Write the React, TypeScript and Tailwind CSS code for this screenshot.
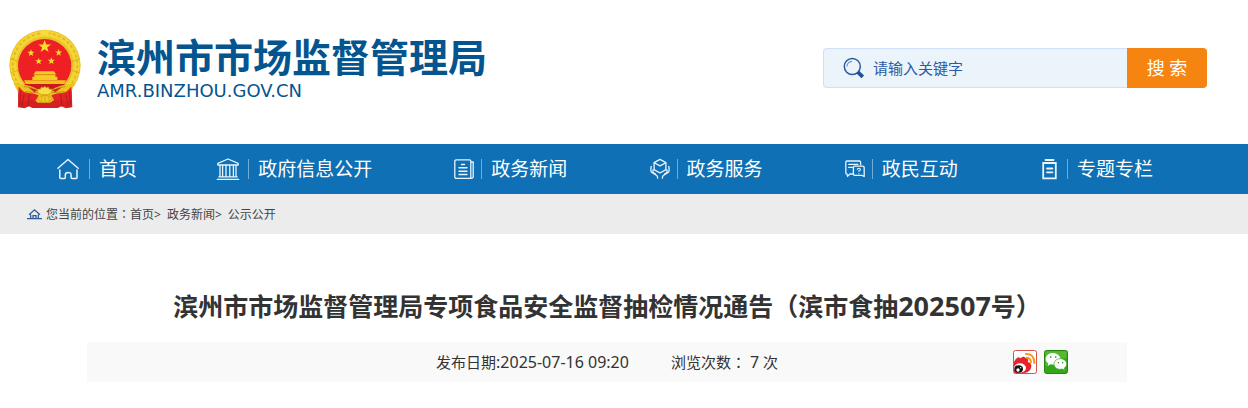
import type { ReactNode } from "react";

const STAR = "0,-10 2.4,-3.2 9.5,-3.1 3.8,1.2 5.9,8.1 0,4 -5.9,8.1 -3.8,1.2 -9.5,-3.1 -2.4,-3.2";

function Star({ x, y, s }: { x: number; y: number; s: number }) {
  return <polygon points={STAR} fill="#fbe02a" transform={`translate(${x} ${y}) scale(${s})`} />;
}

function Emblem() {
  return (
    <svg className="h-20 w-[72px] shrink-0" viewBox="27 29 216 240" role="img" aria-label="国徽">
      <circle cx="135" cy="138" r="107" fill="#e9c02a" />
      <circle cx="135" cy="138" r="95" fill="none" stroke="#f3d534" strokeWidth="18" />
      <circle cx="135" cy="138" r="97" fill="none" stroke="#e2b524" strokeWidth="5" strokeDasharray="9 7" />
      <path d="M121 33h28l-5 14h-18z" fill="#f7dc3e" />
      <path d="M32 118l24 10M33 160l24-8M238 118l-24 10M237 160l-24-8" stroke="#d6a31d" strokeWidth="2" />
      <circle cx="134" cy="139" r="80" fill="#ee2023" />
      <Star x={134} y={82} s={2} />
      <Star x={93} y={101} s={1.1} />
      <Star x={176} y={100} s={1.1} />
      <Star x={116} y={126} s={1.1} />
      <Star x={154} y={125} s={1.1} />
      <path d="M107 156h55l6 9h-67zM103 166h63v6h6v10H97v-10h6z" fill="#f4cd22" />
      <path d="M100 166h69" stroke="#d79c16" strokeWidth="2" />
      <path d="M72 183h126l-6 12H78z" fill="#f0bf20" />
      <path d="M72 194h124l-18 13-22 6h-43l-22-6z" fill="#c91b1c" />
      <path d="M55 212h160l2 52-20 3-12-6-12 5H98l-12-5-12 6-20-3z" fill="#d51f20" />
      <path d="M40 190c30 8 50 5 72 20h46c22-15 42-12 66-20l-10 28-42 18-22 14h-36l-20-14-40-18z" fill="#edc31c" />
      <path d="M72 202c22 1 32 6 42 14M197 202c-20 1-30 6-42 14M76 217l38 3M194 217l-38 3" stroke="#c98e14" strokeWidth="3" fill="none" />
      <path d="M84 204l28 8-8 7zM186 204l-30 8 10 7z" fill="#d92520" />
      <path d="M112 218l3-9 6 1 3-7 6 2 4-4 5 4 6-2 3 7 6-1 2 9-12 8h-20z" fill="#f8df40" stroke="#cc9313" strokeWidth="2" />
      <path d="M56 202c8 6 10 16 28 19 15 1 22 3 32 7l-10 17c-10-5-22-4-34 2l-18-6z" fill="#e42425" />
      <path d="M214 202c-8 6-10 16-28 19-15 1-22 3-32 7l10 17c10-5 22-4 34 2l18-6z" fill="#e42425" />
      <path d="M62 216l-3 40M72 225l-7 37M88 226l-4 36M208 216l3 40M198 225l7 37M182 226l4 36" stroke="#a8181b" strokeWidth="2.5" fill="none" />
      <path d="M113 239l7-8 15-3 16 3 6 8-12 9-11 2-12-2z" fill="#f1ca23" stroke="#c98e14" strokeWidth="2" />
      <path d="M135 230v18M126 232l-2 13M145 232l3 13" stroke="#d19a16" strokeWidth="2" />
    </svg>
  );
}

function NavIcon({ children }: { children: ReactNode }) {
  return (
    <svg className="h-6 w-[26px] shrink-0" viewBox="0 0 26 24" fill="none" stroke="#e9f4fc" strokeWidth="1.5" strokeLinecap="round" strokeLinejoin="round" aria-hidden="true">
      {children}
    </svg>
  );
}

const navItems = [
  {
    label: "首页",
    icon: (
      <NavIcon>
        <path d="M.9 11.2 11 2.5l10.2 8.7M2.8 13v7.5q0 1 1 1H7.5q.8 0 .8-1V18q0-2.6 2.9-2.6t2.9 2.6v2.5q0 1 .9 1H19q1 0 1-1V13" />
      </NavIcon>
    ),
  },
  {
    label: "政府信息公开",
    icon: (
      <NavIcon>
        <path d="M1.8 8V6.3L12 2l10.2 4.3V8zM1.2 22.3h21.6M2.8 19.8h18.4M4 8.5v10.8M6.6 8.5v10.8M10 8.5v10.8M13.8 8.5v10.8M17.4 8.5v10.8M20 8.5v10.8" strokeWidth="1.3" />
      </NavIcon>
    ),
  },
  {
    label: "政务新闻",
    icon: (
      <NavIcon>
        <path d="M7.3 2.8h13.2q1.3 0 1.3 1.3v17.2H7.3q-1.5 0-1.5-1.5V4.3q0-1.5 1.5-1.5zM22 5h2.2v14.8q0 1.5-2.2 1.5" strokeWidth="1.3" />
        <path d="M12.5 7.5h3M10 10.8h8M10 14.2h8M10 17.5h8" strokeWidth="1.4" />
      </NavIcon>
    ),
  },
  {
    label: "政务服务",
    icon: (
      <NavIcon>
        <path d="m15 2.4 5.9 3.2v7L15 16l-5.9-3.4v-7zM9.6 6 15 8.8 20.4 6M6.2 9.5q-1 3.8.3 5.8l5.2 3.2q1 .8.9 2.7M23.8 9.5q1 3.8-.3 5.8l-5.2 3.2q-1 .8-.9 2.7M8 13v2.6l2.5 1.5M22 13v2.6l-2.5 1.5" strokeWidth="1.3" />
      </NavIcon>
    ),
  },
  {
    label: "政民互动",
    icon: (
      <NavIcon>
        <path d="M13.5 17H10l-2.5 2.2L7 17q-1.2 0-1.2-1.3V5.2Q5.8 4 7 4h12.3q1.3 0 1.3 1.3v2.3M8.6 7.3h9.2M8.6 10.3h4M14.7 9.2h8q1.5 0 1.5 1.5v8.8l-2.2-1.1h-7.3q-1.3 0-1.3-1.4v-6.3q0-1.5 1.3-1.5z" strokeWidth="1.3" />
        <path d="M17.3 12.4q.2-1.2 1.6-1.2t1.5 1.2q0 .8-1.5 1.4v.7M18.9 16.5v.1" strokeWidth="1.1" />
      </NavIcon>
    ),
  },
  {
    label: "专题专栏",
    icon: (
      <NavIcon>
        <path d="M8.2 6h12.6v15.3H8.2zM10.5 3h8M12 11.5h5.4M12 15.3h5.4" strokeWidth="1.8" strokeLinejoin="miter" />
      </NavIcon>
    ),
  },
];

function SearchIcon() {
  return (
    <svg className="size-[22px] shrink-0" viewBox="0 0 22 22" fill="none" aria-hidden="true">
      <circle cx="9.3" cy="9.5" r="8" stroke="#2a5ba3" strokeWidth="1.5" />
      <path d="M4 9.5a5.3 5.3 0 0 1 5-5.2" stroke="#6e94c8" strokeWidth="1.2" />
      <path d="m14.8 15.2 5 4.6" stroke="#20509a" strokeWidth="3.8" />
    </svg>
  );
}

function WeiboIcon() {
  return (
    <svg className="size-6" viewBox="0 0 72 72" aria-hidden="true">
      <rect x="1.5" y="1.5" width="69" height="69" rx="6" fill="#fff" stroke="#d9504b" strokeWidth="3" />
      <path d="M3 36q5-12 14-14l7 3 3-4q8-3 10 3 9-1 9 7l-2 5q11 2 11 12 0 12-12 19-10 4-24 3H6q-3-2-3-6z" fill="#e5232c" />
      <ellipse cx="21" cy="54" rx="18" ry="14" fill="#fff" />
      <ellipse cx="17" cy="57" rx="13" ry="11" fill="#151515" />
      <circle cx="15" cy="60" r="5" fill="#fff" />
      <circle cx="23" cy="53" r="2" fill="#fff" />
      <path d="M39 12q25-1 25 27M41 23q12 0 13 14" fill="none" stroke="#f59a1e" strokeWidth="6" strokeLinecap="round" />
    </svg>
  );
}

function WechatIcon() {
  return (
    <svg className="size-6" viewBox="0 0 72 72" aria-hidden="true">
      <rect x="1.5" y="1.5" width="69" height="69" rx="6" fill="#35a51c" stroke="#23870f" strokeWidth="3" />
      <path d="M4 4h64v20Q35 27 4 50z" fill="#55b935" />
      <path d="M27 9C14 9 5 17 5 27c0 6 3 10 8 13l-2 8 9-5q19 4 27-8 6-12-4-20-7-6-16-6z" fill="#fff" />
      <path d="M49 26c-11 0-19 7-19 16s8 16 19 16l6-1 8 4-2-7c4-3 7-7 7-12 0-9-8-16-19-16z" fill="#fff" stroke="#35a51c" strokeWidth="2" />
      <g fill="#2b8c18">
        <circle cx="20" cy="21" r="2.6" />
        <circle cx="35" cy="21" r="2.6" />
        <circle cx="43" cy="38" r="2.3" />
        <circle cx="56" cy="38" r="2.3" />
      </g>
    </svg>
  );
}

function Colon() {
  return <span className="font-['Noto_Sans_CJK_TC',sans-serif]" lang="zh-TW">：</span>;
}

export default function App() {
  return (
    <div className="min-h-screen bg-white font-['Noto_Sans','Noto_Sans_CJK_SC',sans-serif] text-[#333]">
      <header className="flex items-start justify-between pr-[41px] pl-[9px]">
        <a href="#" className="flex h-36 items-start gap-4 pt-[29px] text-[#04558f]">
          <Emblem />
          <span className="flex flex-col pt-2.5">
            <span className="font-['Liberation_Sans','Noto_Sans_CJK_SC',sans-serif] text-[39px] leading-10 font-bold whitespace-nowrap">滨州市市场监督管理局</span>
            <span className="font-['DejaVu_Sans',sans-serif] text-[18px] leading-6">AMR.BINZHOU.GOV.CN</span>
          </span>
        </a>
        <form className="mt-12 flex h-10 w-96" onSubmit={(e) => e.preventDefault()}>
          <label className="flex min-w-0 flex-1 items-center gap-2 rounded-l border border-r-0 border-[#cfe0f8] bg-[#ebf3fb] pl-[19px]">
            <SearchIcon />
            <input
              type="text"
              aria-label="请输入关键字"
              placeholder="请输入关键字"
              className="w-full min-w-0 bg-transparent text-[15px] text-[#2a5ba3] outline-none placeholder:text-[#2a5ba3]"
            />
          </label>
          <button type="submit" className="w-20 rounded-r bg-[#f68411] text-lg text-white">
            搜 索
          </button>
        </form>
      </header>

      <nav className="flex min-h-[50px] flex-wrap items-center justify-between bg-[#0f70b5] pr-[95px] pl-[57px] text-white">
        {navItems.map((item) => (
          <a key={item.label} href="#" className="flex items-center">
            {item.icon}
            <span className="ml-1.5 h-5 w-px bg-[#70abd6]" />
            <span className="ml-[9px] min-w-10 text-[19px] leading-7 whitespace-nowrap">{item.label}</span>
          </a>
        ))}
      </nav>

      <div className="flex h-10 items-center gap-1 bg-[#ececec] pl-[27px] text-xs text-[#444]">
        <svg className="h-3 w-[15px]" viewBox="0 0 15 12" fill="none" stroke="#2e5b9b" strokeWidth="1.3" aria-hidden="true">
          <path d="M2 6.8 7.5 1.8 13 6.8M3.7 6.5v4M11.3 6.5v4M0 10.7h15M6 10.5V7.7h3v2.8" />
        </svg>
        <p className="flex items-baseline gap-1.5">
          <span>您当前的位置<Colon /><a href="#">首页</a>&gt;</span>
          <span><a href="#">政务新闻</a>&gt;</span>
          <a href="#">公示公开</a>
        </p>
      </div>

      <main className="pt-[52px] pr-[121px] pb-6 pl-[87px]">
        <h1 className="text-center text-[25px] leading-10 font-bold">
          滨州市市场监督管理局专项食品安全监督抽检情况通告（滨市食抽<span className="text-[27px]">202507</span>号）
        </h1>
        <div className="mt-4 grid min-h-10 grid-cols-[1fr_auto_1fr] items-center bg-[#f9f9f9] text-[15px]">
          <p className="col-start-2 flex gap-[42px]">
            <span>发布日期<span className="text-base">:2025-07-16 09:20</span></span>
            <span>浏览次数<Colon /> <span className="text-base">7</span> 次</span>
          </p>
          <div className="flex justify-end gap-[7px] pr-[59px]">
            <a href="#" aria-label="分享到微博"><WeiboIcon /></a>
            <a href="#" aria-label="分享到微信"><WechatIcon /></a>
          </div>
        </div>
      </main>
    </div>
  );
}
